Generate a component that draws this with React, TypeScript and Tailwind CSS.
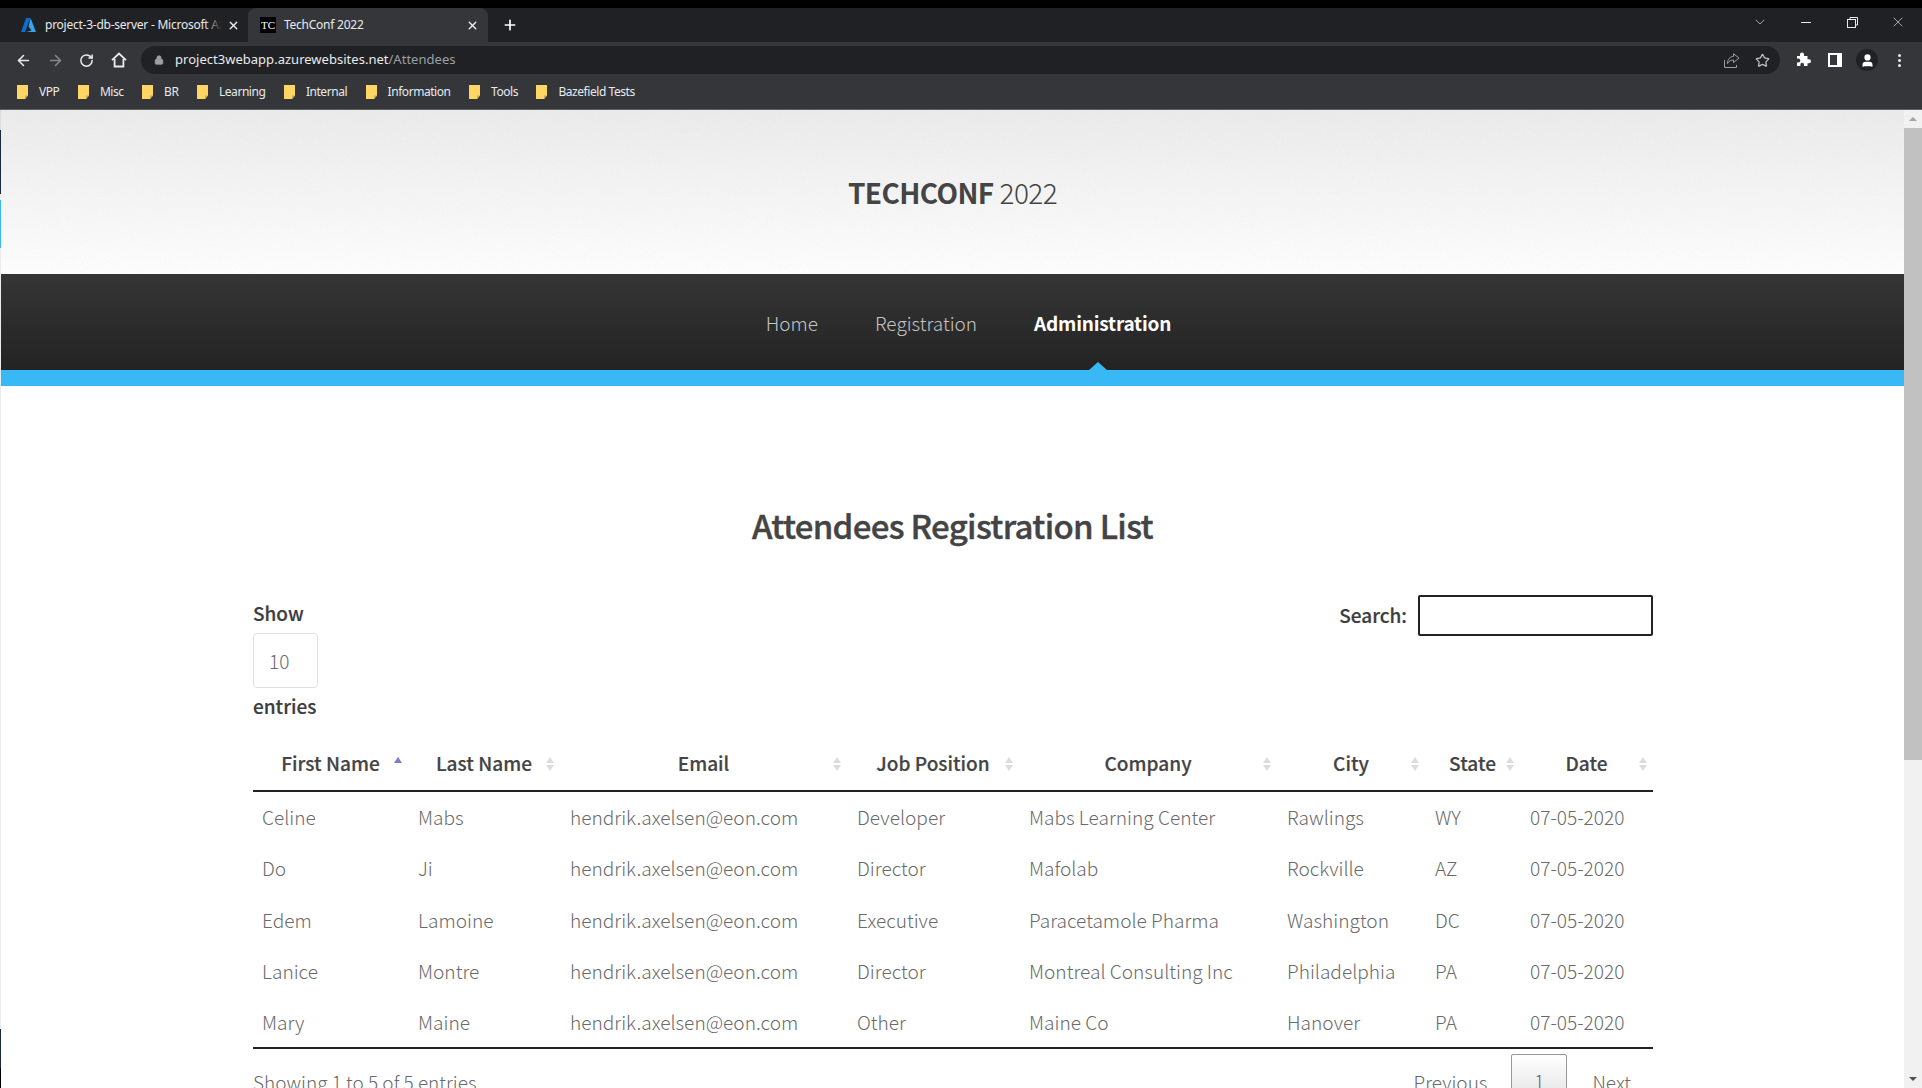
import React from "react";
import { ArrowLeft, ArrowRight, RotateCw, Lock, Star, User, X, Plus, ChevronDown } from "lucide-react";

const bookmarks = ["VPP", "Misc", "BR", "Learning", "Internal", "Information", "Tools", "Bazefield Tests"];
const rows = [
  ["Celine", "Mabs", "Developer", "Mabs Learning Center", "Rawlings", "WY"],
  ["Do", "Ji", "Director", "Mafolab", "Rockville", "AZ"],
  ["Edem", "Lamoine", "Executive", "Paracetamole Pharma", "Washington", "DC"],
  ["Lanice", "Montre", "Director", "Montreal Consulting Inc", "Philadelphia", "PA"],
  ["Mary", "Maine", "Other", "Maine Co", "Hanover", "PA"],
];
const cols = [
  { t: "First Name", w: 155 },
  { t: "Last Name", w: 152 },
  { t: "Email", w: 287 },
  { t: "Job Position", w: 172 },
  { t: "Company", w: 258 },
  { t: "City", w: 148 },
  { t: "State", w: 95 },
  { t: "Date", w: 133 },
];

function Folder() {
  return (
    <svg width="11" height="14" viewBox="0 0 11 14" className="shrink-0">
      <path d="M0 0h11v10.5L8 14H0z" fill="#fdd663" />
      <path d="M11 10.5H8V14z" fill="#c9a84a" />
    </svg>
  );
}

function Sort({ active }: { active?: boolean }) {
  return (
    <svg width="8" height="14" viewBox="0 0 8 14" className="absolute right-[6px] top-[20px]">
      <path d="M4 0l4 6H0z" fill={active ? "#7b7bd6" : "#dcdcdc"} />
      {!active && <path d="M4 14l4-6H0z" fill="#dcdcdc" />}
    </svg>
  );
}

function Grain({ opacity }: { opacity: number }) {
  return (
    <svg className="absolute inset-0 w-full h-full pointer-events-none" style={{ opacity }}>
      <filter id="grain">
        <feTurbulence type="fractalNoise" baseFrequency="0.9" numOctaves="2" />
        <feColorMatrix type="saturate" values="0" />
      </filter>
      <rect width="100%" height="100%" filter="url(#grain)" />
    </svg>
  );
}

export default function App() {
  return (
    <div className="h-[1088px] w-[1922px] overflow-hidden flex flex-col bg-black font-['Noto_Sans_CJK_SC','Source_Sans_Pro','Open_Sans',sans-serif]">
      <div className="h-[8px] shrink-0 bg-black" />
      {/* tabs */}
      <div className="h-[34px] shrink-0 bg-[#202124] flex font-['Noto_Sans',sans-serif] text-[12px] tracking-[-0.25px] text-[#e8eaed] relative">
        <div className="w-[248px] flex items-center pl-[21px] relative">
          <svg width="15" height="14" viewBox="0 0 15 14" className="shrink-0">
            <path d="M5 0h4.2L4.2 14H0z" fill="#0a6ed1" />
            <path d="M9.6 0L15 14H5.4l5-1.6L7.6 8.6z" fill="#35a4ea" />
          </svg>
          <span className="ml-[9px] w-[177px] overflow-hidden whitespace-nowrap">project-3-db-server - Microsoft Azure</span>
          <div className="absolute left-[204px] top-0 w-[18px] h-full bg-gradient-to-r from-transparent to-[#202124]" />
          <X size={13} strokeWidth={2.5} className="absolute left-[227px]" />
        </div>
        <div className="w-[240px] flex items-center bg-[#35363a] rounded-t-[8px] relative">
          <span className="ml-[12px] w-[16px] h-[16px] bg-black text-white text-[11px] flex items-center justify-center font-['Liberation_Serif',serif] tracking-normal">TC</span>
          <span className="ml-[8px]">TechConf 2022</span>
          <X size={13} strokeWidth={2.5} className="absolute left-[218px]" />
        </div>
        <Plus size={16} strokeWidth={2.5} className="ml-[14px] mt-[9px] text-white" />
        <ChevronDown size={16} strokeWidth={1} className="absolute left-[1752px] top-[6px]" />
        <div className="absolute left-[1801px] top-[14px] w-[10px] h-[1px] bg-[#e8eaed]" />
        <svg width="11" height="11" viewBox="0 0 11 11" fill="none" stroke="#e8eaed" className="absolute left-[1847px] top-[9px]">
          <rect x="0.5" y="2.5" width="8" height="8" />
          <path d="M3 2.5V.5h7.5V8H8.5" />
        </svg>
        <X size={16} strokeWidth={1} className="absolute left-[1890px] top-[6px]" />
      </div>
      {/* toolbar */}
      <div className="h-[36px] shrink-0 bg-[#35363a] flex items-center relative text-[#e8eaed]">
        <ArrowLeft size={17} strokeWidth={2.2} className="absolute left-[15px]" />
        <ArrowRight size={17} strokeWidth={2.2} className="absolute left-[47px] text-[#85878a]" />
        <RotateCw size={15} strokeWidth={2.4} className="absolute left-[79px]" />
        <svg width="16" height="16" viewBox="0 0 16 16" fill="none" stroke="#e8eaed" strokeWidth="1.8" className="absolute left-[111px]">
          <path d="M1 8.2L8 1.5l7 6.7M3.6 7v7.5h8.8V7" />
        </svg>
        <div className="ml-[141px] w-[1639px] h-[28px] rounded-full bg-[#202124] flex items-center text-[13px] font-['Noto_Sans',sans-serif] tracking-[0.02px]">
          <Lock size={10} className="ml-[13px] text-[#9aa0a6]" fill="#9aa0a6" />
          <span className="ml-[11px]">project3webapp.azurewebsites.net</span>
          <span className="text-[#9aa0a6]">/Attendees</span>
        </div>
        <svg width="16" height="15" viewBox="0 0 16 15" fill="none" stroke="#9aa0a6" className="absolute left-[1724px] top-[11px]">
          <path d="M.5 7v7.5h12V12" />
          <path d="M15 5L9.5.8v2.6C6 3.6 3.8 6 3.4 10.5 5 8 7 7 9.5 7v2.6z" />
        </svg>
        <Star size={15} strokeWidth={2} className="absolute left-[1755px] top-[11px] text-[#bdc1c6]" />
        <svg width="15" height="15" viewBox="0 0 15 15" fill="#fff" className="absolute left-[1796px] top-[10px]">
          <path d="M1 4h3V2.6a2 2 0 0 1 4 0V4h3.5v3.3H13a2 2 0 0 1 0 4h-1.5V14H8v-1.4a1.8 1.8 0 0 0-3.6 0V14H1v-3.4h1.3a2 2 0 0 0 0-4H1z" />
        </svg>
        <div className="absolute left-[1828px] top-[11px] w-[14px] h-[14px] bg-white flex pl-[2px] py-[2px]"><div className="w-[7px] bg-[#35363a]" /></div>
        <div className="absolute left-[1856px] top-[7px] w-[22px] h-[22px] rounded-full bg-[#202124] flex items-center justify-center">
          <User size={15} className="text-white" fill="white" />
        </div>
        <div className="absolute left-[1898px] top-[12px] flex flex-col gap-[2px]">
          <span className="w-[3px] h-[3px] rounded-full bg-[#e8eaed]" />
          <span className="w-[3px] h-[3px] rounded-full bg-[#e8eaed]" />
          <span className="w-[3px] h-[3px] rounded-full bg-[#e8eaed]" />
        </div>
      </div>
      {/* bookmarks */}
      <div className="h-[32px] shrink-0 bg-[#35363a] border-b border-[#5f6063] flex items-center pb-[4px] pl-[17px] gap-[18.5px] text-[12px] text-[#e8eaed] font-['Noto_Sans',sans-serif] tracking-[-0.45px]">
        {bookmarks.map((b) => (
          <div key={b} className="flex items-center gap-[11px]">
            <Folder />
            <span>{b}</span>
          </div>
        ))}
      </div>
      {/* page + scrollbar */}
      <div className="flex-1 min-h-0 flex bg-white">
        <div className="w-[1px] shrink-0 flex flex-col bg-[#ececec]">
          <div className="h-[20px] bg-[#dddddd]" />
          <div className="h-[64px] bg-[#1b2a3a]" />
          <div className="h-[6px]" />
          <div className="h-[48px] bg-[#38b9f5]" />
          <div className="flex-1" />
          <div className="h-[39px] bg-[#1b2a3a]" />
          <div className="h-[20px] bg-black" />
        </div>
        <div className="flex-1 min-w-0 overflow-hidden text-[#444444]">
          <header className="relative h-[164px] bg-gradient-to-b from-[#ececec] to-[#ffffff] flex items-center justify-center text-[28px] text-[#444] tracking-[-0.6px]">
            <Grain opacity={0.08} />
            <span className="font-semibold relative">TECHCONF</span>
            <span className="font-light ml-[6px] relative">2022</span>
          </header>
          <nav className="h-[96px] bg-gradient-to-b from-[#353535] to-[#232323] flex items-center justify-center gap-[57px] text-[19px] pl-[32px] pt-[2px] font-light text-[#c4c4c4]">
            <span>Home</span>
            <span>Registration</span>
            <span className="font-bold text-white tracking-[-0.2px]">Administration</span>
          </nav>
          <div className="h-[16px] bg-[#38b9f5] relative">
            <div className="absolute left-[1088px] -top-[8px] w-0 h-0 border-x-[9px] border-x-transparent border-b-[8px] border-b-[#38b9f5]" />
          </div>
          <h1 className="mt-[112.5px] text-center text-[33px] leading-[52px] font-medium text-[#444] tracking-[-0.7px] [-webkit-text-stroke:0.4px_#444]">Attendees Registration List</h1>
          <div className="ml-[252px] w-[1400px] mt-[44.5px] relative">
            <div className="text-[19px] font-medium leading-[30px] text-[#3d3d3d] [-webkit-text-stroke:0.2px_#3d3d3d]">
              <div className="pt-[2.5px]">Show</div>
              <div className="mt-[5.5px] mb-[2.5px] w-[65px] h-[55px] border border-[#e2e2e2] rounded-[4px] flex items-center pl-[15px] font-extralight text-[19px] text-[#6a6a6a] [-webkit-text-stroke:0]">10</div>
              <div>entries</div>
            </div>
            <div className="absolute right-0 top-[0px] flex items-center text-[19px] font-medium text-[#3d3d3d] [-webkit-text-stroke:0.2px_#3d3d3d]">
              <span>Search:</span>
              <div className="ml-[11px] w-[235px] h-[41px] border-2 border-[#222] rounded-[2px] bg-white" />
            </div>
            <table className="mt-[16px] w-[1400px] table-fixed border-collapse text-[19.1px]">
              <colgroup>
                {cols.map((c) => <col key={c.t} style={{ width: c.w }} />)}
              </colgroup>
              <thead>
                <tr className="h-[54px] border-b-2 border-[#222]">
                  {cols.map((c, i) => (
                    <th key={c.t} className="relative font-medium text-[#444] text-center p-0 [-webkit-text-stroke:0.2px_#444]">
                      {c.t}
                      <Sort active={i === 0} />
                    </th>
                  ))}
                </tr>
              </thead>
              <tbody className="font-extralight text-[#6a6a6a]">
                {rows.map((r) => (
                  <tr key={r[0]} className="h-[51.4px]">
                    <td className="pl-[9px] pt-[2px]">{r[0]}</td>
                    <td className="pl-[10px] pt-[2px]">{r[1]}</td>
                    <td className="pl-[10px] pt-[2px]">hendrik.axelsen@eon.com</td>
                    <td className="pl-[10px] pt-[2px]">{r[2]}</td>
                    <td className="pl-[10px] pt-[2px]">{r[3]}</td>
                    <td className="pl-[10px] pt-[2px]">{r[4]}</td>
                    <td className="pl-[10px] pt-[2px]">{r[5]}</td>
                    <td className="pl-[10px] pt-[2px]">07-05-2020</td>
                  </tr>
                ))}
              </tbody>
            </table>
            <div className="border-t-2 border-[#222] flex items-start justify-between pt-[5px] text-[19px] font-extralight text-[#6a6a6a]">
              <span className="mt-[14px]">Showing 1 to 5 of 5 entries</span>
              <div className="flex items-start">
                <span className="mt-[14px]">Previous</span>
                <span className="ml-[24px] w-[56px] h-[60px] border border-[#979797] rounded-[2px] bg-gradient-to-b from-white to-[#dcdcdc] flex justify-center pt-[12px]">1</span>
                <span className="mt-[14px] ml-[25px] mr-[22px]">Next</span>
              </div>
            </div>
          </div>
        </div>
        <div className="w-[18px] shrink-0 bg-[#f1f1f1] flex flex-col items-center">
          <div className="h-[18px] flex items-center justify-center">
            <div className="w-0 h-0 border-x-[4px] border-x-transparent border-b-[4px] border-b-[#a3a3a3]" />
          </div>
          <div className="w-full h-[632px] bg-[#c1c1c1]" />
          <div className="flex-1" />
          <div className="h-[18px] flex items-center justify-center">
            <div className="w-0 h-0 border-x-[4px] border-x-transparent border-t-[4px] border-t-[#505050]" />
          </div>
        </div>
      </div>
    </div>
  );
}
